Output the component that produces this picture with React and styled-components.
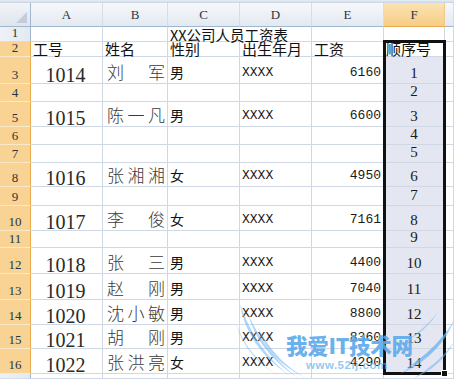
import React from 'react';
import styled, { createGlobalStyle } from 'styled-components';

const COLS = [31, 72, 65, 72, 72, 72, 61, 9];
const ROWS = [3, 24, 15, 15, 27, 18, 25, 18, 18, 24, 19, 25, 17, 26, 26, 25, 24, 25, 5];

const CJK = '"Noto Sans CJK SC", "Noto Sans", sans-serif';
const SERIF = '"Liberation Serif", "DejaVu Serif", serif';
const MONO = '"Liberation Mono", "DejaVu Sans Mono", monospace';
const GRID = '#d0d7e5';

const GlobalStyle = createGlobalStyle`
  html, body { margin: 0; padding: 0; background: #fff; overflow: hidden; }
`;

const Sheet = styled.div`
  position: relative;
  display: grid;
  grid-template-columns: ${COLS.map((c) => `${c}px`).join(' ')};
  grid-template-rows: ${ROWS.map((r) => `${r}px`).join(' ')};
  width: 454px;
  height: 379px;
  overflow: hidden;
  background: #fff;
`;

const TopStrip = styled.div`
  grid-column: 1 / -1;
  background: linear-gradient(#e9eef5, #c8d4e3);
`;

const Corner = styled.div`
  position: relative;
  box-sizing: border-box;
  background: linear-gradient(#f1f4f8, #dfe5ed);
  border-right: 1px solid #9eb6ce;
  border-bottom: 1px solid #9eb6ce;
  &::after {
    content: '';
    position: absolute;
    right: 3px;
    bottom: 3px;
    border-style: solid;
    border-width: 0 0 11px 11px;
    border-color: transparent transparent #c3ccd8 transparent;
  }
`;

const ColHeader = styled.div`
  box-sizing: border-box;
  display: flex;
  align-items: center;
  justify-content: center;
  background: ${(p) =>
    p.$active
      ? 'linear-gradient(#fbe3b3, #f6cd85)'
      : 'linear-gradient(#f6f8fb, #e3e9f1)'};
  border-right: 1px solid ${(p) => (p.$active ? '#f0c987' : '#d5dde7')};
  border-bottom: 1px solid ${(p) => (p.$active ? '#e8a94f' : '#9eb6ce')};
  font-family: ${SERIF};
  font-size: 13px;
  color: #2b3542;
  padding-top: 1px;
`;

const RowHeader = styled.div`
  box-sizing: border-box;
  display: flex;
  align-items: flex-end;
  justify-content: center;
  background: ${(p) => (p.$active ? '#f8d393' : 'linear-gradient(90deg, #eef2f7, #e4e9f0)')};
  border-right: 1px solid ${(p) => (p.$active ? '#e9a94d' : '#9eb6ce')};
  border-bottom: 1px solid ${(p) => (p.$active ? '#fbe8c6' : '#d5dde7')};
  font-family: ${SERIF};
  font-size: 13px;
  line-height: 12px;
  color: #2b3542;
  padding-bottom: 2px;
`;

const Cell = styled.div`
  box-sizing: border-box;
  display: flex;
  align-items: flex-end;
  min-width: 0;
  white-space: nowrap;
  border-right: 1px solid ${GRID};
  border-bottom: 1px solid ${GRID};
  background: ${(p) => (p.$sel ? '#e4e7f1' : 'transparent')};
  line-height: 1;
  color: #1a1a1a;
`;

const TitleCell = styled(Cell)`
  grid-column: span 2;
  font-family: ${CJK};
  font-size: 14.5px;
  line-height: 13px;
  padding: 0 0 0 2px;
  color: #111;
`;

const HeadCell = styled(Cell)`
  font-family: ${CJK};
  font-size: 15px;
  line-height: 14px;
  padding: 0 0 0 2px;
  color: #111;
`;

const IdCell = styled(Cell)`
  justify-content: center;
  font-family: ${SERIF};
  font-size: 20px;
  line-height: 0.8;
  color: #2a2a2a;
  padding-right: 2px;
`;

const NameCell = styled(Cell)`
  justify-content: space-between;
  font-family: ${CJK};
  font-weight: 300;
  font-size: 17px;
  color: #3a3a3a;
  padding: 0 2px 3px 4px;
`;

const GenderCell = styled(Cell)`
  font-family: ${CJK};
  font-size: 14px;
  padding: 0 0 4px 2px;
  color: #111;
`;

const MonoCell = styled(Cell)`
  justify-content: ${(p) => (p.$right ? 'flex-end' : 'flex-start')};
  font-family: ${MONO};
  font-size: 13px;
  padding: 0 2px 4px 2px;
  color: #1a1a1a;
`;

const SeqCell = styled(Cell)`
  justify-content: center;
  font-family: ${SERIF};
  font-size: 15px;
  padding-bottom: 2px;
  color: #1a1a1a;
`;

const Selection = styled.div`
  position: absolute;
  box-sizing: border-box;
  border: 3px solid #111;
  pointer-events: none;
`;

const FillHandle = styled.div`
  position: absolute;
  right: -5px;
  bottom: -5px;
  width: 5px;
  height: 5px;
  background: #111;
  border: 1px solid #fff;
`;

const Watermark = styled.div`
  position: absolute;
  left: 236px;
  top: 296px;
  width: 218px;
  height: 83px;
  pointer-events: none;
`;

const Wings = styled.svg`
  position: absolute;
  left: 0;
  top: 0;
`;

const Brand = styled.div`
  position: relative;
  display: flex;
  flex-direction: column;
  align-items: flex-start;
  padding: 38px 0 0 50px;
  gap: 4px;
`;

const BrandTitle = styled.span`
  font-family: ${CJK};
  font-weight: 900;
  font-size: 21.5px;
  line-height: 1;
  letter-spacing: -0.3px;
  color: rgba(66, 156, 232, 0.78);
  text-shadow: 0 0 1px rgba(255, 255, 255, 0.6);
`;

const BrandUrl = styled.span`
  margin-left: 20px;
  font-family: "Liberation Sans", Arial, sans-serif;
  font-weight: 700;
  font-size: 11.5px;
  line-height: 1;
  letter-spacing: 0.5px;
  color: rgba(100, 176, 236, 0.7);
`;

const rows = [
  { n: 1, title: 'XX公司人员工资表' },
  { n: 2, head: ['工号', '姓名', '性别', '出生年月', '工资', '顺序号'] },
  { n: 3, a: '1014', b: ['刘', '军'], c: '男', d: 'XXXX', e: '6160', f: '1' },
  { n: 4, f: '2' },
  { n: 5, a: '1015', b: ['陈', '一', '凡'], c: '男', d: 'XXXX', e: '6600', f: '3' },
  { n: 6, f: '4' },
  { n: 7, f: '5' },
  { n: 8, a: '1016', b: ['张', '湘', '湘'], c: '女', d: 'XXXX', e: '4950', f: '6' },
  { n: 9, f: '7' },
  { n: 10, a: '1017', b: ['李', '俊'], c: '女', d: 'XXXX', e: '7161', f: '8' },
  { n: 11, f: '9' },
  { n: 12, a: '1018', b: ['张', '三'], c: '男', d: 'XXXX', e: '4400', f: '10' },
  { n: 13, a: '1019', b: ['赵', '刚'], c: '男', d: 'XXXX', e: '7040', f: '11' },
  { n: 14, a: '1020', b: ['沈', '小', '敏'], c: '男', d: 'XXXX', e: '8800', f: '12' },
  { n: 15, a: '1021', b: ['胡', '刚'], c: '男', d: 'XXXX', e: '8360', f: '13' },
  { n: 16, a: '1022', b: ['张', '洪', '亮'], c: '女', d: 'XXXX', e: '4290', f: '14' },
  { n: 17, partial: true },
];

const letters = ['A', 'B', 'C', 'D', 'E', 'F'];

function renderRow(r) {
  const active = r.n >= 2 && r.n <= 16;
  const sel = r.n >= 3 && r.n <= 16;
  const out = [
    <RowHeader key={`h${r.n}`} $active={active}>
      {r.partial ? '' : r.n}
    </RowHeader>,
  ];
  if (r.title) {
    out.push(<Cell key="a" />, <Cell key="b" />);
    out.push(<TitleCell key="c">{r.title}</TitleCell>);
    out.push(<Cell key="e" />, <Cell key="f" />, <Cell key="g" />);
    return out;
  }
  if (r.head) {
    r.head.forEach((t, i) => out.push(<HeadCell key={i}>{t}</HeadCell>));
    out.push(<Cell key="g" />);
    return out;
  }
  out.push(<IdCell key="a">{r.a || ''}</IdCell>);
  out.push(
    <NameCell key="b">
      {(r.b || []).map((ch, i) => (
        <span key={i}>{ch}</span>
      ))}
    </NameCell>
  );
  out.push(<GenderCell key="c">{r.c || ''}</GenderCell>);
  out.push(<MonoCell key="d">{r.d || ''}</MonoCell>);
  out.push(
    <MonoCell key="e" $right>
      {r.e || ''}
    </MonoCell>
  );
  out.push(
    <SeqCell key="f" $sel={sel}>
      {r.f || ''}
    </SeqCell>
  );
  out.push(<Cell key="g" />);
  return out;
}

const sum = (arr, from, to) => arr.slice(from, to).reduce((a, b) => a + b, 0);

export default function App() {
  // selection F2:F16 -> column index 6, grid rows 3..17
  const left = sum(COLS, 0, 6) - 1;
  const width = COLS[6] + 2;
  const top = sum(ROWS, 0, 3) - 2;
  const height = sum(ROWS, 3, 18) + 3;

  return (
    <>
      <GlobalStyle />
      <Sheet>
        <TopStrip />
        <Corner />
        {letters.map((l) => (
          <ColHeader key={l} $active={l === 'F'}>
            {l}
          </ColHeader>
        ))}
        <ColHeader />
        {rows.map((r) => renderRow(r))}
        <Selection style={{ left, top, width, height }}>
          <FillHandle />
        </Selection>
        <Watermark>
          <Wings width="218" height="83" viewBox="0 0 218 83">
            <g fill="rgba(110,180,240,0.55)">
              <path d="M4 8 Q10 50 54 80 Q20 54 4 8 Z" />
              <path d="M12 18 Q22 56 62 82 Q30 58 12 18 Z" />
              <path d="M0 28 Q10 62 46 82 Q14 64 0 28 Z" />
              <path d="M22 32 Q32 64 70 82 Q40 66 22 32 Z" />
              <path d="M218 24 Q206 58 170 72 Q202 52 218 24 Z" />
              <path d="M212 34 Q198 64 164 78 Q192 60 212 34 Z" />
              <path d="M218 46 Q204 72 178 82 Q204 66 218 46 Z" />
              <path d="M202 16 Q190 36 168 46 Q188 34 202 16 Z" />
            </g>
          </Wings>
          <Brand>
            <BrandTitle>我爱IT技术网</BrandTitle>
            <BrandUrl>www.52ij.com</BrandUrl>
          </Brand>
        </Watermark>
      </Sheet>
    </>
  );
}
